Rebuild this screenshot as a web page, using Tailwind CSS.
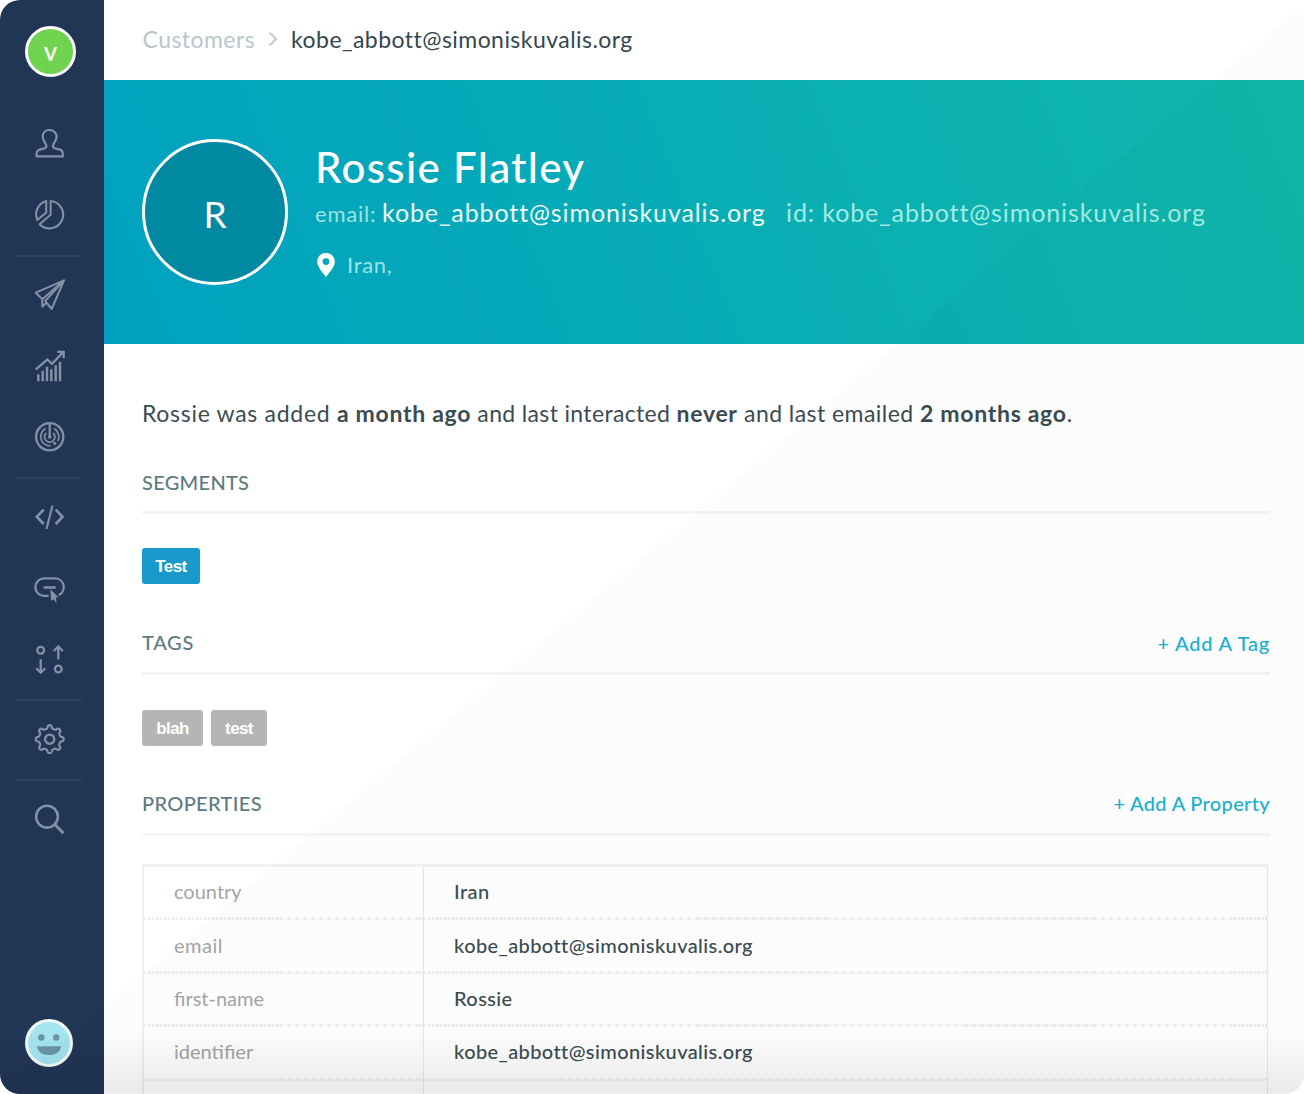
<!DOCTYPE html>
<html lang="en">
<head>
<meta charset="utf-8">
<title>Rossie Flatley</title>
<script src="https://cdn.jsdelivr.net/npm/@tailwindcss/browser@4"></script>
</head>
<body class="bg-white font-['Lato',sans-serif]">
<div class="relative flex h-[1094px] w-[1304px] overflow-hidden rounded-[20px] bg-white">

  <!-- Sidebar -->
  <aside class="flex w-[104px] shrink-0 flex-col bg-[#213555] text-[#8390a5]">
    <div class="mt-[26px] ml-[25px] flex size-[51px] items-center justify-center rounded-full border-[3px] border-white bg-[#6fd34f] text-[26px] font-medium text-white"><span>v</span></div>

    <nav class="mt-[31px] flex flex-col">
      <a class="flex h-[71px] items-center pl-[33px]">
        <svg class="size-[33px]" viewBox="0 0 33 33" fill="none" stroke="currentColor" stroke-width="2.200" stroke-linejoin="round"><path d="M16.500 3C12.300 3 9.700 6 9.700 9.600c0 3.400 1.700 5.400 3 7.400.9 1.500.9 3-.4 3.900-1.900 1.200-5 1.300-7.100 2.400C3.700 24 3.500 25 3.500 29.400h26.400c0-4.400-.2-5.400-1.700-6.100-2.100-1.100-5.300-1.200-7.200-2.400-1.300-.9-1.300-2.400-.4-3.900 1.300-2 3-4 3-7.400C23.600 6 20.700 3 16.500 3z"/></svg>
      </a>
      <a class="flex h-[71px] items-center pl-[33px]">
        <svg class="size-[33px]" viewBox="0 0 33 33" fill="none" stroke="currentColor" stroke-width="2.100" stroke-linejoin="round"><path d="M13.200 3V14.600L4.300 22A14 14 0 0 1 13.200 3z"/><path d="M17.600 3V16.800L6.600 26.200A13.700 13.700 0 1 0 17.600 3z"/></svg>
      </a>
    </nav>
    <div class="mt-[5px] mb-[2px] ml-4 h-[2px] w-[65px] bg-[#2e4262]"></div>
    <nav class="flex flex-col">
      <a class="flex h-[71px] items-center pl-[33px]">
        <svg class="size-[33px]" viewBox="0 0 33 33" fill="none" stroke="currentColor" stroke-width="2" stroke-linejoin="round"><path d="M31 2.300L2.800 14.700l6.500 6.600L31 2.300zM31 2.300L18.700 31l-6.500-8L31 2.300zM9.300 21.300V28.700l4.300-4.200"/></svg>
      </a>
      <a class="flex h-[71px] items-center pl-[33px]">
        <svg class="size-[33px]" viewBox="0 0 33 33" fill="none" stroke="currentColor" stroke-width="2.300"><path d="M2.800 20.300l11.500-9.800 4.700 4.300L30.500 2.800M24.300 2.800H30.700V9.200"/><path stroke-width="2.500" d="M5.300 32.300v-7M9.700 32.300V21.700M14 32.300V17.700M18.300 32.300v-12M22.700 32.300v-16M27 32.300V12.700"/></svg>
      </a>
      <a class="flex h-[71px] items-center pl-[33px]">
        <svg class="size-[33px]" viewBox="0 0 33 33" fill="none" stroke="currentColor" stroke-width="2.300"><circle cx="16.700" cy="16.700" r="13.600"/><path d="M16.700 3V17"/><path stroke-width="1.700" d="M12.500 8.500a9.300 9.300 0 0 0 5 17.400M21 8.500a9.300 9.300 0 0 1 3.800 12.500"/><path stroke-width="1.700" d="M13.300 13a5.200 5.200 0 1 0 6.800 0"/><circle cx="16.700" cy="17" r="1.800" fill="currentColor" stroke="none"/><circle cx="21.700" cy="23.300" r="1.600" fill="currentColor" stroke="none"/></svg>
      </a>
    </nav>
    <div class="mt-[5px] mb-[2px] ml-4 h-[2px] w-[65px] bg-[#2e4262]"></div>
    <nav class="flex flex-col">
      <a class="flex h-[71px] items-center pl-[33px]">
        <svg class="size-[33px]" viewBox="0 0 33 33" fill="none" stroke="currentColor" stroke-width="2.700"><path d="M10.700 9.600L3.800 16.700l6.900 7.300M22.700 9.600l6.900 7.100-6.900 7.300"/><path stroke-width="2.100" d="M19.500 5.500L13.500 29"/></svg>
      </a>
      <a class="flex h-[71px] items-center pl-[33px]">
        <svg class="size-[33px]" viewBox="0 0 33 33" fill="none" stroke="currentColor" stroke-width="2.300"><path d="M15.500 24.800H11A8.700 8.700 0 0 1 11 7.400H22A8.700 8.700 0 0 1 25.700 24"/><path stroke-width="2.500" d="M10.700 16.500H22.700"/><path fill="currentColor" stroke="none" d="M17.300 18.300L25.300 26l-2.300.7.6 5.800-2.600-4-2.900.9z"/></svg>
      </a>
      <a class="flex h-[71px] items-center pl-[33px]">
        <svg class="size-[33px]" viewBox="0 0 33 33" fill="none" stroke="currentColor" stroke-width="2.300"><circle cx="7.700" cy="8.300" r="3.400"/><circle cx="25.300" cy="27" r="3.400"/><path d="M7.700 17.300V30.500M3.200 26.200l4.500 4.500 4.500-4.500M25.300 17.500V4.500M20.800 9l4.500-4.500L29.800 9"/></svg>
      </a>
    </nav>
    <div class="mt-[5px] mb-[2px] ml-4 h-[2px] w-[65px] bg-[#2e4262]"></div>
    <a class="flex h-[71px] items-center pl-[33px]">
      <svg class="size-[33px]" viewBox="0 0 33 33" fill="none" stroke="currentColor" stroke-width="2.200" stroke-linejoin="round"><g transform="translate(16.700 17.200)"><path d="M-3.300-10.300Q-2.300-10.700-2.100-12.200Q-1.800-14 0-14T2.100-12.200Q2.300-10.700 3.300-10.300L5-9.600Q6-9.200 7.100-10.100Q8.700-11.200 9.900-9.900T10.100-7.100Q9.200-6 9.600-5L10.300-3.300Q10.700-2.300 12.200-2.100Q14-1.800 14 0T12.200 2.100Q10.700 2.300 10.300 3.300L9.600 5Q9.200 6 10.100 7.100Q11.200 8.700 9.900 9.900T7.100 10.100Q6 9.200 5 9.600L3.300 10.300Q2.300 10.700 2.100 12.200Q1.800 14 0 14T-2.100 12.200Q-2.300 10.700-3.300 10.300L-5 9.600Q-6 9.200-7.100 10.100Q-8.700 11.200-9.900 9.900T-10.100 7.100Q-9.200 6-9.600 5L-10.300 3.300Q-10.700 2.300-12.200 2.100Q-14 1.800-14 0T-12.200-2.100Q-10.700-2.300-10.300-3.300L-9.600-5Q-9.200-6-10.100-7.100Q-11.200-8.700-9.900-9.900T-7.100-10.100Q-6-9.200-5-9.600z"/><circle r="4.600" stroke-width="2.400"/></g></svg>
    </a>
    <div class="mt-[5px] mb-[2px] ml-4 h-[2px] w-[65px] bg-[#2e4262]"></div>
    <a class="flex h-[71px] items-center pl-[33px]">
      <svg class="size-[33px]" viewBox="0 0 33 33" fill="none" stroke="currentColor" stroke-width="2.600"><circle cx="14" cy="14.700" r="10.900"/><path stroke-width="3" d="M21.800 22.500l8.700 8.700"/></svg>
    </a>
    <svg class="mt-auto mb-[27px] ml-[25px] size-12" viewBox="0 0 48 48"><circle cx="24" cy="24" r="24" fill="#f4fafa"/><circle cx="24" cy="24" r="21" fill="#a4e5f0"/><g fill="#6b94a5"><circle cx="16.300" cy="18.500" r="3.200"/><circle cx="31.300" cy="18.500" r="3.200"/><path d="M12 27.300H36C35.500 33 30.500 36 24 36S12.500 33 12 27.300z"/></g></svg>
  </aside>

  <main class="flex min-w-0 flex-1 flex-col">
    <!-- Breadcrumb -->
    <header class="flex h-20 shrink-0 items-center pb-0.5 pl-[38.500px] text-[23px] tracking-[0.450px] whitespace-nowrap">
      <span class="text-[#b9c6ca]">Customers</span>
      <svg class="ml-[13px] h-4 w-[10px]" viewBox="0 0 10 16" fill="none" stroke="#c3cdd0" stroke-width="2.200"><path d="M1.500 1.500L8 8l-6.500 6.500"/></svg>
      <span class="ml-[13px] text-[#34474c]">kobe_abbott@simoniskuvalis.org</span>
    </header>

    <!-- Profile banner -->
    <section class="flex h-[264px] shrink-0 items-start bg-linear-[68deg,#00a1c0,#11b8aa] pt-[59px] pl-[38px] whitespace-nowrap">
      <div class="flex size-[146px] shrink-0 items-center justify-center rounded-full border-[3px] border-white bg-[#0089a0] pt-1 text-[37px] text-white">R</div>
      <div class="mt-1 ml-[27px] flex flex-col">
        <h1 class="h-12 text-[42px] leading-[48px] font-medium tracking-[1.350px] text-white">Rossie Flatley</h1>
        <div class="flex h-[43px] items-baseline text-[25px] leading-[43px] tracking-[0.900px]">
          <span class="w-[67px] text-[22px] tracking-[0.800px] text-[#9be4e2]">email:</span>
          <span class="w-[404px] text-[#ecfbfa]">kobe_abbott@simoniskuvalis.org</span>
          <span class="text-[#a3ebe2]">id: kobe_abbott@simoniskuvalis.org</span>
        </div>
        <div class="mt-[9px] flex h-[43px] items-center text-[22px] tracking-[0.700px] text-[#9be4e2]">
          <svg class="mr-[12px] ml-[2px] h-6 w-[18px]" viewBox="0 0 18 24" fill="#fff" fill-rule="evenodd"><path d="M9 0C4 0 .2 3.700.2 8.500.2 14 5 18.500 9 24c4-5.500 8.800-10 8.800-15.500C17.800 3.700 14 0 9 0zm0 5.200a3.400 3.400 0 1 1 0 6.800 3.400 3.400 0 0 1 0-6.800z"/></svg>
          <span>Iran,</span>
        </div>
      </div>
    </section>

    <!-- Details -->
    <section class="flex shrink-0 flex-col pt-[49px] pr-[34px] pl-[38px]">
      <p class="h-10 text-[23px] leading-10 tracking-[0.700px] whitespace-nowrap text-[#3b4c51]"><span class="tracking-[0.700px]">Rossie was added </span><b>a month ago</b><span class="tracking-[0.350px]"> and last interacted </span><b>never</b><span class="tracking-[0.450px]"> and last emailed </span><b>2 months ago</b>.</p>

      <div class="mt-5 flex h-[61px] items-center justify-between border-b-[3px] border-[#f5f5f5] text-xl font-medium">
        <h2 class="tracking-[0.300px] text-[#5e7b81]">SEGMENTS</h2>
      </div>
      <div class="mt-[34px] flex h-9 gap-2 font-['Liberation_Sans',sans-serif] text-[17px] font-bold tracking-[-0.600px] text-white">
        <span class="flex w-[58px] items-center justify-center rounded-[3px] bg-[#189acb] pt-0.5">Test</span>
      </div>

      <div class="mt-[30px] flex h-[61px] items-center justify-between border-b-[3px] border-[#f5f5f5] text-xl font-medium">
        <h2 class="pb-[3px] tracking-[0.700px] text-[#5e7b81]">TAGS</h2>
        <a class="tracking-[0.800px] text-[#1cb2cf]">+ Add A Tag</a>
      </div>
      <div class="mt-[35px] flex h-9 gap-2 font-['Liberation_Sans',sans-serif] text-[17px] font-bold tracking-[-0.600px] text-white">
        <span class="flex w-[61px] items-center justify-center rounded-[3px] bg-[#b5b5b5] pt-0.5">blah</span>
        <span class="flex w-[56px] items-center justify-center rounded-[3px] bg-[#b5b5b5] pt-0.5">test</span>
      </div>

      <div class="mt-[29px] flex h-[61px] items-center justify-between border-b-[3px] border-[#f5f5f5] text-xl font-medium">
        <h2 class="pb-0.5 tracking-[0.350px] text-[#5e7b81]">PROPERTIES</h2>
        <a class="pb-0.5 tracking-[0.330px] text-[#1cb2cf]">+ Add A Property</a>
      </div>

      <div class="mt-[28px] mr-0.5 flex h-[240px] border-t-[3px] border-r border-l-2 border-t-[#f3f3f3] border-r-[#e8e8e8] border-l-[#efefef] text-xl">
        <div class="flex w-[280px] shrink-0 flex-col border-r border-[#e8e8e8] text-[#a3a6a7]">
          <div class="flex h-[53.400px] shrink-0 flex-col"><span class="flex flex-1 items-center pb-0.5 pl-[30px]">country</span><i class="h-[3px] bg-[repeating-linear-gradient(90deg,#ececec_0_1.500px,transparent_1.500px_2.670px)]"></i></div>
          <div class="flex h-[53.400px] shrink-0 flex-col"><span class="flex flex-1 items-center pb-0.5 pl-[30px] tracking-[0.500px]">email</span><i class="h-[3px] bg-[repeating-linear-gradient(90deg,#ececec_0_1.500px,transparent_1.500px_2.670px)]"></i></div>
          <div class="flex h-[53.400px] shrink-0 flex-col"><span class="flex flex-1 items-center pb-0.5 pl-[30px]">first-name</span><i class="h-[3px] bg-[repeating-linear-gradient(90deg,#ececec_0_1.500px,transparent_1.500px_2.670px)]"></i></div>
          <div class="flex h-[53.400px] shrink-0 flex-col"><span class="flex flex-1 items-center pb-0.5 pl-[30px]">identifier</span><i class="h-[3px] bg-[repeating-linear-gradient(90deg,#ececec_0_1.500px,transparent_1.500px_2.670px)]"></i></div>
        </div>
        <div class="flex flex-1 flex-col font-medium tracking-[0.400px] text-[#3b4c51]">
          <div class="flex h-[53.400px] shrink-0 flex-col"><span class="flex flex-1 items-center pb-0.5 pl-[30px]">Iran</span><i class="h-[3px] bg-[repeating-linear-gradient(90deg,#ececec_0_1.500px,transparent_1.500px_2.670px)]"></i></div>
          <div class="flex h-[53.400px] shrink-0 flex-col"><span class="flex flex-1 items-center pb-0.5 pl-[30px]">kobe_abbott@simoniskuvalis.org</span><i class="h-[3px] bg-[repeating-linear-gradient(90deg,#ececec_0_1.500px,transparent_1.500px_2.670px)]"></i></div>
          <div class="flex h-[53.400px] shrink-0 flex-col"><span class="flex flex-1 items-center pb-0.5 pl-[30px]">Rossie</span><i class="h-[3px] bg-[repeating-linear-gradient(90deg,#ececec_0_1.500px,transparent_1.500px_2.670px)]"></i></div>
          <div class="flex h-[53.400px] shrink-0 flex-col"><span class="flex flex-1 items-center pb-0.5 pl-[30px]">kobe_abbott@simoniskuvalis.org</span><i class="h-[3px] bg-[repeating-linear-gradient(90deg,#ececec_0_1.500px,transparent_1.500px_2.670px)]"></i></div>
        </div>
      </div>
    </section>
  </main>

  <!-- Diagonal sheen and bottom fade -->
  <div class="pointer-events-none absolute inset-0 bg-black/[0.010] [clip-path:polygon(1304px_4px,1304px_1094px,0_1094px)]"></div>
  <div class="pointer-events-none absolute inset-x-0 bottom-0 h-[64px] border-b border-black/5 bg-linear-to-b from-transparent to-black/[0.070]"></div>
</div>
</body>
</html>
